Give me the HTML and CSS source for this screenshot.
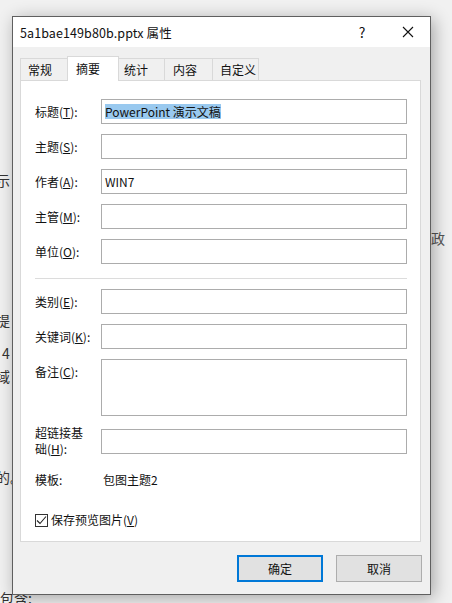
FILE: index.html
```html
<!DOCTYPE html>
<html lang="zh-CN">
<head>
<meta charset="utf-8">
<title>属性</title>
<link rel="stylesheet" href="styles.css">
</head>
<body>
<div class="doc">
  <div class="line l1">演示</div>
  <div class="line l2">政</div>
  <div class="line l3">前提</div>
  <div class="line l4">4</div>
  <div class="line l5">区域</div>
  <div class="line l6">目的。</div>
  <div class="line l7">包含:</div>
</div>

<div class="dialog">
  <div class="titlebar">
    <span class="title">5a1bae149b80b.pptx 属性</span>
    <span class="help">?</span>
    <svg class="close" width="12" height="12" viewBox="0 0 12 12"><path d="M1 1L11 11M11 1L1 11" stroke="#111" stroke-width="1.1" fill="none"/></svg>
  </div>

  <div class="tabs">
    <div class="tab t1">常规</div>
    <div class="tab t2 active">摘要</div>
    <div class="tab t3">统计</div>
    <div class="tab t4">内容</div>
    <div class="tab t5">自定义</div>
  </div>

  <div class="panel">
    <div class="group">
      <div class="row"><label>标题(<u>T</u>):</label><div class="field"><span class="sel">PowerPoint 演示文稿</span></div></div>
      <div class="row"><label>主题(<u>S</u>):</label><div class="field"></div></div>
      <div class="row"><label>作者(<u>A</u>):</label><div class="field">WIN7</div></div>
      <div class="row"><label>主管(<u>M</u>):</label><div class="field"></div></div>
      <div class="row"><label>单位(<u>O</u>):</label><div class="field"></div></div>
    </div>
    <div class="sep"></div>
    <div class="group">
      <div class="row"><label>类别(<u>E</u>):</label><div class="field"></div></div>
      <div class="row"><label>关键词(<u>K</u>):</label><div class="field"></div></div>
      <div class="row"><label>备注(<u>C</u>):</label><div class="field tall"></div></div>
    </div>
    <div class="row link"><label class="wrap">超链接基础(<u>H</u>):</label><div class="field"></div></div>
    <div class="row plain"><span class="lab">模板:</span><span class="val">包图主题2</span></div>
    <div class="check">
      <span class="box"><svg width="11" height="11" viewBox="0 0 11 11"><path d="M1 5.5L4 8.5L10 1.5" stroke="#222" stroke-width="1.1" fill="none"/></svg></span>
      <span>保存预览图片(<u>V</u>)</span>
    </div>
  </div>

  <div class="buttons">
    <div class="btn default">确定</div>
    <div class="btn">取消</div>
  </div>
</div>
</body>
</html>
```

FILE: styles.css
```css
* { box-sizing: border-box; }
html, body { margin: 0; padding: 0; }
body {
  width: 452px;
  height: 603px;
  overflow: hidden;
  background: #f1f1f1;
  font-family: "Noto Sans CJK SC", "Noto Sans", sans-serif;
  color: #111;
  position: relative;
}

/* background document */
.doc {
  font-size: 14px;
  color: #333;
  line-height: 20px;
  padding-top: 170px;
}
.line { height: 20px; white-space: nowrap; }
.l1 { margin-left: -18px; }
.l2 { margin-top: 38px; margin-left: 431px; color: #555; }
.l3 { margin-top: 62px; margin-left: -18px; }
.l4 { margin-top: 13px; margin-left: 2px; }
.l5 { margin-top: 3px; margin-left: -18px; }
.l6 { margin-top: 81px; margin-left: -18px; }
.l7 { margin-top: 101px; margin-left: 0; }

/* dialog window */
.dialog {
  position: absolute;
  left: 12px;
  top: 16px;
  width: 419px;
  height: 579px;
  background: #f0f0f0;
  border: 1px solid #5f5f5f;
  box-shadow: 3px 3px 16px rgba(0,0,0,0.32);
  font-size: 12px;
}

.titlebar {
  height: 30px;
  background: #fff;
  display: flex;
  align-items: center;
  padding-left: 7px;
  position: relative;
}
.title { font-size: 12.5px; letter-spacing: 0.1px; flex: 1; }
.help { font-size: 14px; width: 12px; margin-right: 34px; text-align: center; }
.close { margin-right: 16px; }

.tabs {
  display: flex;
  align-items: flex-end;
  margin-top: 9px;
  padding-left: 7px;
  height: 24px;
  position: relative;
  z-index: 1;
}
.tab {
  height: 22px;
  line-height: 21px;
  border: 1px solid #d9d9d9;
  border-bottom: none;
  background: #f0f0f0;
  padding-left: 7px;
  margin-right: -1px;
}
.tab.active {
  height: 25px;
  background: #fff;
  margin-bottom: -1px;
  line-height: 24px;
  position: relative;
  padding-left: 8px;
}
.t1 { width: 48px; }
.t2 { width: 52px; }
.t3 { width: 47px; padding-left: 5px; }
.t4 { width: 49px; padding-left: 8px; }
.t5 { width: 47px; }

.panel {
  margin-left: 7px;
  width: 401px;
  height: 462px;
  background: #fff;
  border: 1px solid #d9d9d9;
  padding: 18px 13px 0 14px;
}

.group { display: flex; flex-direction: column; gap: 10px; }

.row { display: flex; align-items: flex-start; }
.row label {
  width: 66px;
  line-height: 25px;
  white-space: nowrap;
}
.field {
  width: 306px;
  height: 25px;
  border: 1px solid #acacac;
  padding-left: 3px;
  line-height: 23px;
}
.field.tall { height: 57px; }
.sel { background: #99c9ef; padding: 0; display: inline-block; line-height: 15px; }

.sep {
  height: 1px;
  background: #dcdcdc;
  margin: 14px 0 10px;
}

.link { margin-top: 13px; }
.row label.wrap {
  width: 56px;
  margin-right: 10px;
  white-space: normal;
  line-height: 16px;
  margin-top: -4px;
}

.plain {
  margin-top: 15px;
  line-height: 16px;
}
.plain .lab { width: 68px; }

.check {
  margin-top: 24px;
  display: flex;
  align-items: center;
  line-height: 16px;
  gap: 3px;
}
.box {
  width: 13px;
  height: 13px;
  border: 1px solid #333;
  background: #fff;
  display: flex;
  align-items: center;
  justify-content: center;
}

.buttons {
  display: flex;
  justify-content: flex-end;
  gap: 13px;
  padding-right: 8px;
  margin-top: 13px;
}
.btn {
  width: 86px;
  height: 27px;
  border: 1px solid #adadad;
  background: #e1e1e1;
  text-align: center;
  line-height: 25px;
}
.btn.default {
  border: 2px solid #0078d7;
  line-height: 23px;
}
```
